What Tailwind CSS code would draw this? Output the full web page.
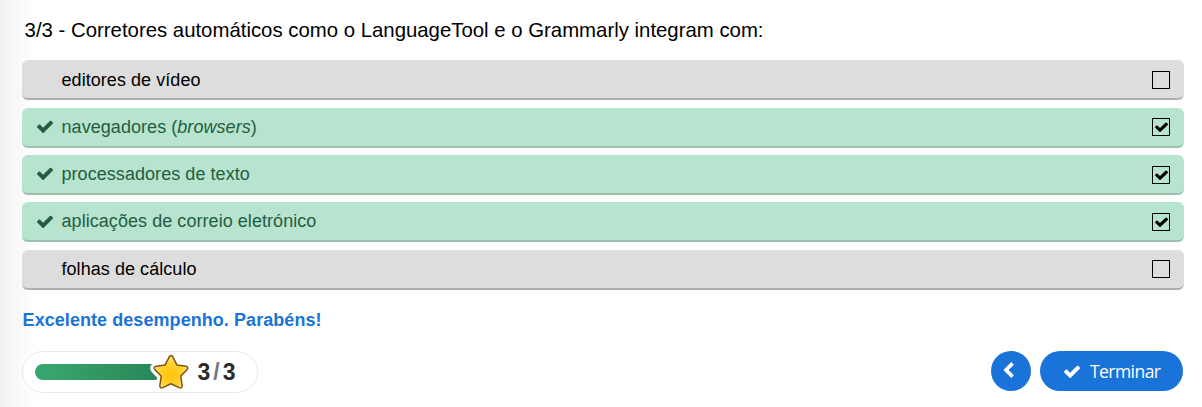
<!DOCTYPE html>
<html lang="pt">
<head>
<meta charset="utf-8">
<title>Quiz</title>
<script src="https://cdn.jsdelivr.net/npm/@tailwindcss/browser@4"></script>
</head>
<body class="w-[1202px] h-[407px] overflow-hidden bg-white bg-linear-to-r from-[#f2f2f2] to-white to-[36px] font-['Liberation_Sans',sans-serif] text-black">
<svg class="hidden">
  <symbol id="check" viewBox="121 270 1550 1252" preserveAspectRatio="none"><path d="M1671 566q0 40-28 68l-724 724-136 136q-28 28-68 28t-68-28l-136-136-362-362q-28-28-28-68t28-68l136-136q28-28 68-28t68 28l294 295 656-657q28-28 68-28t68 28l136 136q28 28 28 68z"/></symbol>
</svg>
<main class="flex h-full flex-col pl-[22px] pr-[18px]">
  <h1 class="h-[60px] pt-[18px] pl-[2.6px] text-[20.38px] leading-6 whitespace-nowrap"><span>3/3 - Corretores automáticos como o LanguageTool e o Grammarly integram com:</span></h1>
  <ul class="flex flex-col text-[18px] leading-5 tracking-[0.055px]">
    <li class="mb-2 flex h-10 items-center rounded-md border-b-2 border-[#b0b0b0] bg-[#dddddd] pt-px pl-[39.5px] pr-[14px]"><span>editores de vídeo</span><i class="ml-auto size-[18px] border border-black"></i></li>
    <li class="mb-[7px] flex h-10 items-center rounded-md border-b-2 border-[#9dbfae] bg-[#b6e4ce] pl-[15px] pr-[14px] text-[#255c41]"><svg class="mr-[8.5px] mb-px h-[13px] w-4 fill-current"><use href="#check"/></svg><span>navegadores (<em>browsers</em>)</span><i class="ml-auto flex size-[18px] items-center justify-center border border-black text-black"><svg class="h-[10px] w-[13px] fill-current"><use href="#check"/></svg></i></li>
    <li class="mb-[7px] flex h-10 items-center rounded-md border-b-2 border-[#9dbfae] bg-[#b6e4ce] pl-[15px] pr-[14px] text-[#255c41]"><svg class="mr-[8.5px] mb-px h-[13px] w-4 fill-current"><use href="#check"/></svg><span>processadores de texto</span><i class="mt-[2px] ml-auto flex size-[18px] items-center justify-center border border-black text-black"><svg class="h-[10px] w-[13px] fill-current"><use href="#check"/></svg></i></li>
    <li class="mb-2 flex h-10 items-center rounded-md border-b-2 border-[#9dbfae] bg-[#b6e4ce] pl-[15px] pr-[14px] text-[#255c41]"><svg class="mr-[8.5px] h-[13px] w-4 fill-current"><use href="#check"/></svg><span>aplicações de correio eletrónico</span><i class="mt-[2px] ml-auto flex size-[18px] items-center justify-center border border-black text-black"><svg class="h-[10px] w-[13px] fill-current"><use href="#check"/></svg></i></li>
    <li class="flex h-10 items-center rounded-md border-b-2 border-[#b0b0b0] bg-[#dddddd] pl-[39.5px] pr-[14px]"><span>folhas de cálculo</span><i class="ml-auto size-[18px] border border-black"></i></li>
  </ul>
  <p class="mt-5 h-5 pl-[0.6px] text-[18px] leading-5 font-bold tracking-[0.06px] text-[#1a73d9]">Excelente desempenho. Parabéns!</p>
  <footer class="mt-[21px] flex items-start">
    <div class="flex h-[42px] w-[236px] items-center rounded-full border border-[#e9e9e9] bg-white pl-3">
      <div class="relative h-4 w-[125px] rounded-l-full bg-linear-to-r from-[#38a970] to-[#298658]">
        <svg class="absolute -top-[12px] left-[112px] h-[40px] w-[44px]" viewBox="0 0 44 40" stroke-linejoin="round">
          <defs><radialGradient id="gold" cy=".58"><stop offset="0" stop-color="#ffc20e"/><stop offset=".65" stop-color="#ffd02b"/><stop offset="1" stop-color="#ffe177"/></radialGradient></defs>
          <path d="M22.4 4.6Q24 2.3 25.6 4.6L29.9 12.9 39 14.3Q41.8 15.2 40.2 17.4L33.7 24.2 35.2 33.6Q35.1 36.8 32.2 35.6L24 31.7 15.8 35.6Q12.9 36.8 12.8 33.6L14.3 24.2 7.8 17.4Q6.2 15.2 9 14.3L18.1 12.9Z" fill="#fff" stroke="#fff" stroke-width="8"/>
          <path d="M22.4 4.6Q24 2.3 25.6 4.6L29.9 12.9 39 14.3Q41.8 15.2 40.2 17.4L33.7 24.2 35.2 33.6Q35.1 36.8 32.2 35.6L24 31.7 15.8 35.6Q12.9 36.8 12.8 33.6L14.3 24.2 7.8 17.4Q6.2 15.2 9 14.3L18.1 12.9Z" fill="url(#gold)" stroke="#825414" stroke-width="1.5"/>
        </svg>
      </div>
      <div class="ml-[37.5px] flex items-center text-[23px] leading-6 font-bold text-[#2b2b2b]"><span>3</span><span class="mx-[3px] text-[#777]">/</span><span>3</span></div>
    </div>
    <div class="ml-auto flex gap-[9px] pr-px text-white">
      <button class="flex size-10 items-center justify-center rounded-full bg-[#1a73d9]" aria-label="Anterior"><svg class="mr-[5px] mb-[2px] h-4 w-[11px]" viewBox="0 0 11 16" fill="none" stroke="currentColor" stroke-width="3.7"><path d="M9.6 1.4 3 8l6.6 6.6"/></svg></button>
      <button class="flex h-10 w-[143px] items-center rounded-full bg-[#1a73d9] pl-6 font-['Open_Sans',sans-serif] text-[17.5px] leading-5 tracking-[-0.55px]"><svg class="mr-[10px] h-[13px] w-4 fill-current"><use href="#check"/></svg><span>Terminar</span></button>
    </div>
  </footer>
</main>
</body>
</html>
